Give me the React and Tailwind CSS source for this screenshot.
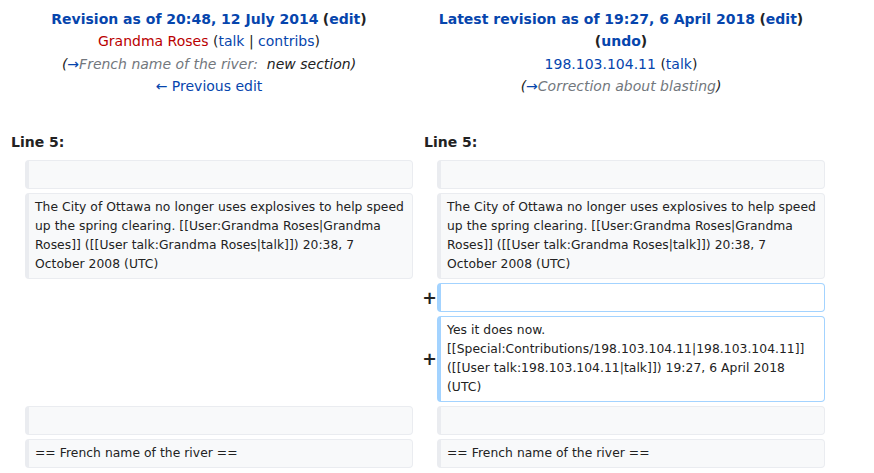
import React from "react";

const LINK = "text-[#0645ad]";

function Box({ added, lines }) {
  return (
    <div
      className={
        "rounded-[4px] border border-l-4 px-[6px] py-[4px] text-[12.32px] tracking-[0.05px] leading-[19px] min-h-[29px] " +
        (added ? "border-[#a3d3ff] bg-white" : "border-[#eaecf0] bg-[#f8f9fa]")
      }
    >
      {lines.map((l, i) => (
        <div key={i} className="whitespace-nowrap">
          {l}
        </div>
      ))}
    </div>
  );
}

function Marker({ plus }) {
  return (
    <div className="flex items-center justify-end text-[17.5px] font-bold leading-none mr-[-4px] pt-[2px]">
      {plus ? "+" : ""}
    </div>
  );
}

const ottawa = [
  "The City of Ottawa no longer uses explosives to help speed",
  "up the spring clearing. [[User:Grandma Roses|Grandma",
  "Roses]] ([[User talk:Grandma Roses|talk]]) 20:38, 7",
  "October 2008 (UTC)",
];

const rows = [
  { left: [], right: [] },
  { left: ottawa, right: ottawa },
  { left: null, right: [], added: true },
  {
    left: null,
    right: [
      "Yes it does now.",
      "[[Special:Contributions/198.103.104.11|198.103.104.11]]",
      "([[User talk:198.103.104.11|talk]]) 19:27, 6 April 2018",
      "(UTC)",
    ],
    added: true,
  },
  { left: [], right: [] },
  { left: ["== French name of the river =="], right: ["== French name of the river =="] },
];

export default function App() {
  return (
    <div className="w-[874px] h-[473px] overflow-hidden bg-white text-[#222] font-['DejaVu_Sans',sans-serif] text-[14px] leading-[22.4px]">
      <div className="ml-[5px] pt-[8px]">
        {/* header */}
        <div className="grid grid-cols-[408px_408px] gap-x-[4px]">
          <div className="text-center">
            <div>
              <b className={LINK}>Revision as of 20:48, 12 July 2014</b>{" "}
              <b>
                (<span className={LINK}>edit</span>)
              </b>
            </div>
            <div>
              <span className="text-[#ba0000]">Grandma Roses</span> (
              <span className={LINK}>talk</span> | <span className={LINK}>contribs</span>)
            </div>
            <div className="italic">
              (<span className={LINK}>→</span>
              <span className="text-[#72777d]">French name of the river:</span>
              {"\u00a0 "}new section)
            </div>
            <div>
              <span className={LINK}>← Previous edit</span>
            </div>
          </div>
          <div className="text-center">
            <div>
              <b className={LINK}>Latest revision as of 19:27, 6 April 2018</b>{" "}
              <b>
                (<span className={LINK}>edit</span>)
              </b>
            </div>
            <div>
              <b>
                (<span className={LINK}>undo</span>)
              </b>
            </div>
            <div>
              <span className={LINK}>198.103.104.11</span> (<span className={LINK}>talk</span>)
            </div>
            <div className="italic">
              (<span className={LINK}>→</span>
              <span className="text-[#72777d]">Correction about blasting</span>)
            </div>
          </div>
        </div>

        {/* line numbers */}
        <div className="grid grid-cols-[408px_408px] gap-x-[4px] mt-[33px] font-bold">
          <div className="pl-[6px]">Line 5:</div>
          <div className="pl-[7px]">Line 5:</div>
        </div>

        {/* diff rows */}
        <div className="flex flex-col gap-[4px] mt-[7px]">
          {rows.map((r, i) => (
            <div key={i} className="grid grid-cols-[16px_388px_16px_388px] gap-x-[4px]">
              <Marker />
              {r.left === null ? <div /> : <Box lines={r.left} />}
              <Marker plus={r.added} />
              <Box added={r.added} lines={r.right} />
            </div>
          ))}
        </div>
      </div>
    </div>
  );
}
